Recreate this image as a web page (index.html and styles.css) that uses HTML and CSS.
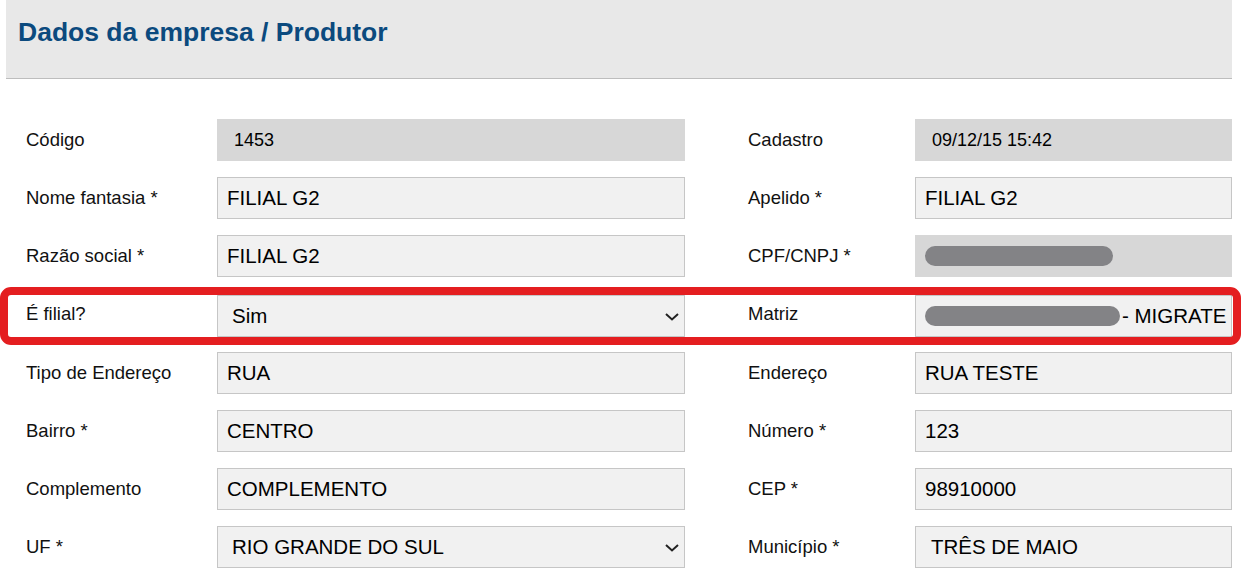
FILE: index.html
```html
<!DOCTYPE html>
<html lang="pt">
<head>
<meta charset="utf-8">
<title>Dados da empresa / Produtor</title>
<link rel="stylesheet" href="styles.css">
</head>
<body>
<div class="page">
  <header class="header">
    <h1 class="title">Dados da empresa / Produtor</h1>
  </header>
  <section class="form">
    <div class="row">
      <div class="field left">
        <span class="label">Código</span>
        <div class="box readonly small">1453</div>
      </div>
      <div class="field right">
        <span class="label">Cadastro</span>
        <div class="box readonly small">09/12/15 15:42</div>
      </div>
    </div>
    <div class="row">
      <div class="field left">
        <span class="label">Nome fantasia *</span>
        <div class="box">FILIAL G2</div>
      </div>
      <div class="field right">
        <span class="label">Apelido *</span>
        <div class="box">FILIAL G2</div>
      </div>
    </div>
    <div class="row">
      <div class="field left">
        <span class="label">Razão social *</span>
        <div class="box">FILIAL G2</div>
      </div>
      <div class="field right">
        <span class="label">CPF/CNPJ *</span>
        <div class="box readonly"><span class="blur cpf"></span></div>
      </div>
    </div>
    <div class="row highlighted">
      <div class="field left">
        <span class="label label-up">É filial?</span>
        <div class="box select"><span>Sim</span>
          <svg class="chev" width="14" height="8" viewBox="0 0 14 8"><path d="M1 1 L7 6.5 L13 1" fill="none" stroke="#222" stroke-width="2"/></svg>
        </div>
      </div>
      <div class="field right">
        <span class="label label-up">Matriz</span>
        <div class="box matriz"><span class="blur matriz-blur"></span><span>- MIGRATE</span></div>
      </div>
    </div>
    <div class="row">
      <div class="field left">
        <span class="label">Tipo de Endereço</span>
        <div class="box">RUA</div>
      </div>
      <div class="field right">
        <span class="label">Endereço</span>
        <div class="box">RUA TESTE</div>
      </div>
    </div>
    <div class="row">
      <div class="field left">
        <span class="label">Bairro *</span>
        <div class="box">CENTRO</div>
      </div>
      <div class="field right">
        <span class="label">Número *</span>
        <div class="box">123</div>
      </div>
    </div>
    <div class="row">
      <div class="field left">
        <span class="label">Complemento</span>
        <div class="box">COMPLEMENTO</div>
      </div>
      <div class="field right">
        <span class="label">CEP *</span>
        <div class="box">98910000</div>
      </div>
    </div>
    <div class="row">
      <div class="field left">
        <span class="label">UF *</span>
        <div class="box select"><span>RIO GRANDE DO SUL</span>
          <svg class="chev" width="14" height="8" viewBox="0 0 14 8"><path d="M1 1 L7 6.5 L13 1" fill="none" stroke="#222" stroke-width="2"/></svg>
        </div>
      </div>
      <div class="field right">
        <span class="label">Município *</span>
        <div class="box select-plain">TRÊS DE MAIO</div>
      </div>
    </div>
  </section>
</div>
</body>
</html>
```
FILE: styles.css
```css
* { box-sizing: border-box; }
html, body { margin: 0; padding: 0; background: #fff; }
body {
  font-family: "Liberation Sans", Arial, sans-serif;
  color: #111;
  overflow: hidden;
}
.page {
  width: 1226px;
  margin-left: 6px;
}
.header {
  height: 79px;
  background: #e8e8e8;
  border-bottom: 1px solid #bdbdbd;
  padding: 16px 0 0 12px;
}
.title {
  margin: 0;
  font-size: 26.5px;
  line-height: 32px;
  font-weight: bold;
  color: #0b4a7e;
}
.form {
  padding: 40px 0 0 20px;
  display: flex;
  flex-direction: column;
  gap: 16px;
}
.row {
  display: flex;
  gap: 63px;
  height: 42px;
}
.highlighted {
  position: relative;
  margin-top: 2px;
  margin-bottom: -1px;
}
.highlighted::after {
  content: "";
  position: absolute;
  left: -26px;
  right: -9px;
  top: -8px;
  bottom: -8px;
  border: 8px solid #e41e20;
  border-radius: 11px;
  pointer-events: none;
}
.field {
  display: grid;
  align-items: center;
}
.left { grid-template-columns: 191px 468px; }
.right { grid-template-columns: 167px 317px; }
.label {
  font-size: 18.5px;
  line-height: 20px;
}
.label-up { margin-top: -4px; }
.box {
  height: 42px;
  background: #f1f1f1;
  border: 1px solid #c6c6c6;
  font-size: 20.5px;
  padding-left: 9px;
  display: flex;
  align-items: center;
  color: #000;
  white-space: nowrap;
  overflow: hidden;
}
.readonly {
  background: #d7d7d7;
  border-color: #d7d7d7;
}
.small {
  font-size: 18px;
  padding-left: 16px;
}
.select {
  padding-left: 14px;
  padding-right: 5px;
  justify-content: space-between;
}
.select-plain { padding-left: 15px; }
.chev { display: block; margin-top: 1px; }
.blur {
  display: inline-block;
  height: 20px;
  border-radius: 10px;
  background: #838386;
}
.cpf { width: 188px; }
.matriz { padding-left: 9px; }
.matriz-blur { width: 195px; margin-right: 2px; }
```
